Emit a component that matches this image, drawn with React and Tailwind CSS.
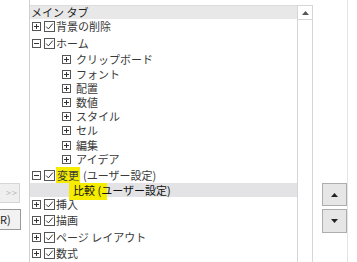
import React from "react";

const font = { fontFamily: '"Noto Sans CJK JP", "Noto Sans", sans-serif' };

function Exp({ minus }) {
  return (
    <svg width="9" height="9" viewBox="0 0 9 9" className="shrink-0">
      <rect x="0.5" y="0.5" width="8" height="8" fill="white" stroke="#555" />
      <line x1="2" y1="4.5" x2="7" y2="4.5" stroke="#333" />
      {!minus && <line x1="4.5" y1="2" x2="4.5" y2="7" stroke="#333" />}
    </svg>
  );
}

function Check() {
  return (
    <svg width="11" height="11" viewBox="0 0 11 11" className="shrink-0">
      <rect x="0.5" y="0.5" width="10" height="10" fill="white" stroke="#555" />
      <path d="M2.2 5.6 L4.4 7.9 L8.8 2.6" fill="none" stroke="#333" strokeWidth="1" />
    </svg>
  );
}

function Top({ h, label, minus }) {
  return (
    <div className="flex items-center pl-[2px]" style={{ height: h }}>
      <Exp minus={minus} />
      <span className="ml-[3px] flex"><Check /></span>
      <span className="ml-[1px] text-[11px] leading-none text-[#3a3a3a] whitespace-nowrap">{label}</span>
    </div>
  );
}

function Child({ h, label }) {
  return (
    <div className="flex items-center pl-[32px]" style={{ height: h }}>
      <Exp />
      <span className="ml-[5px] text-[11px] leading-none text-[#3a3a3a] whitespace-nowrap">{label}</span>
    </div>
  );
}

export default function App() {
  return (
    <div className="w-[357px] h-[262px] bg-white flex overflow-hidden" style={font}>
      <div className="w-[29px] shrink-0 flex flex-col pt-[183px] gap-[6px]">
        <div className="w-[20px] h-[20px] bg-[#efefef] border border-l-0 border-[#d6d6d6] flex items-center justify-end pr-[1px] text-[9px] text-[#b8b8b8] tracking-[1px]">&gt;&gt;</div>
        <div className="w-[21px] h-[21px] bg-[#f2f2f2] border border-l-0 border-[#9a9a9a] flex items-center text-[11px] text-[#222]">R)</div>
      </div>
      <div className="w-[268px] shrink-0 border-l border-[#d0d0d0] pt-[5px] flex flex-col">
        <div className="h-[14px] bg-[#e8e8e8] border-t border-[#dcdcdc] flex items-center pl-[1px] text-[11px] text-[#222] leading-none whitespace-nowrap">メイン タブ</div>
        <Top h={15} label="背景の削除" />
        <Top h={18} label="ホーム" minus />
        <Child h={15} label="クリップボード" />
        <Child h={14} label="フォント" />
        <Child h={14} label="配置" />
        <Child h={14} label="数値" />
        <Child h={14} label="スタイル" />
        <Child h={15} label="セル" />
        <Child h={14} label="編集" />
        <Child h={15} label="アイデア" />
        <div className="flex items-center pl-[2px] h-[16px]">
          <Exp minus />
          <span className="ml-[3px] flex"><Check /></span>
          <span className="ml-[1px] text-[11px] leading-none whitespace-nowrap text-[#3a3a3a] flex items-center h-[16px]">
            <span className="bg-[#f5ec00] h-[16px] flex items-center pl-[1px] pr-[1px]">変更</span>
            <span className="ml-[3px]">(ユーザー設定)</span>
          </span>
        </div>
        <div className="h-[14px] bg-[#e3e3e6] flex items-center relative">
          <span className="absolute left-[39px] top-0 w-[38px] h-[17px] bg-[#f5ec00]" />
          <span className="relative ml-[43px] text-[11px] leading-none text-[#111] whitespace-nowrap">比較 (ユーザー設定)</span>
        </div>
        <Top h={15} label="挿入" />
        <Top h={17} label="描画" />
        <Top h={16} label="ページ レイアウト" />
        <Top h={16} label="数式" />
      </div>
      <div className="w-[16px] shrink-0 pt-[5px] flex flex-col">
        <div className="h-[15px] border border-[#d6d6d6] bg-white flex items-center justify-center">
          <svg width="7" height="4" viewBox="0 0 7 4"><path d="M0 4 L3.5 0 L7 4 Z" fill="#555" /></svg>
        </div>
        <div className="flex-1 border-x border-[#d6d6d6]" />
      </div>
      <div className="w-[40px] shrink-0 flex">
        <div className="w-[34px] pl-[9px] pt-[183px] flex flex-col gap-[3px]">
          <div className="w-[25px] h-[23px] bg-[#e6e6e6] border border-[#adadad] flex items-center justify-center">
            <svg width="7" height="4" viewBox="0 0 7 4"><path d="M0 4 L3.5 0 L7 4 Z" fill="#222" /></svg>
          </div>
          <div className="w-[25px] h-[24px] bg-[#e6e6e6] border border-[#adadad] flex items-center justify-center">
            <svg width="7" height="4" viewBox="0 0 7 4"><path d="M0 0 L3.5 4 L7 0 Z" fill="#222" /></svg>
          </div>
        </div>
        <div className="w-px h-full bg-[#e4e4e4]" />
      </div>
    </div>
  );
}
